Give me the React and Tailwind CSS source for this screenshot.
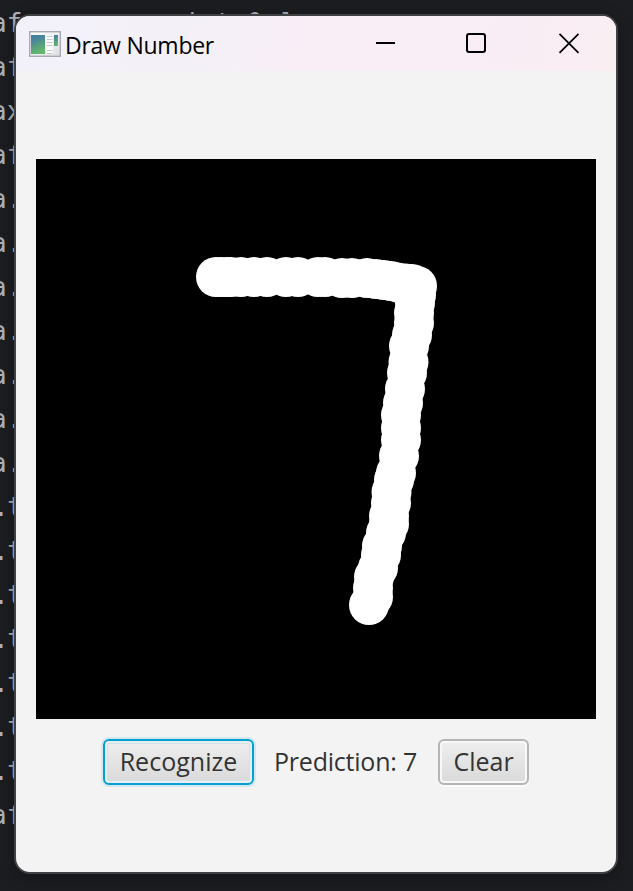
const POINTS = [
  [216,277],[221,277],[227,277],[231,277],[241,277],[254,277],[267,277],[286,277],[298,277],[318,277],[325,277],
  [342,278],[352,278],[367,278],[376,279],[384,280],[391,281],[398,282.5],[406,283.5],[412,284],[417,286],[416,295],
  [415,303],[414,313],[414,323],[412,335],[409,346],[408.5,362],[407,373],[405,389],[403,403],[401,415],[401,428],
  [401,440],[399,456],[396,473],[394,480],[391.5,492],[391,503],[389,516],[389,524],[386,533],[382,546],[381,555],
  [378,568],[374,577],[373,588],[373,597],[369,605],
];

const LINES = [
  "af", "af", "ax", "af", "a.", "a.", "a.", "a.", "a.", "a.", "a.",
  ".t", ".t", ".t", ".t", ".t", ".t", ".t", "af",
];

function AppIcon() {
  return (
    <svg className="block h-[26px] w-8 shrink-0" viewBox="0 0 32 26">
      <defs>
        <linearGradient id="pane" x1="0" y1="0" x2="0.3" y2="1">
          <stop offset="0" stopColor="#3f78a5" />
          <stop offset="1" stopColor="#63b56c" />
        </linearGradient>
        <linearGradient id="frame" x1="0" y1="0" x2="1" y2="1">
          <stop offset="0" stopColor="#ffffff" />
          <stop offset="1" stopColor="#dcdfe2" />
        </linearGradient>
      </defs>
      <rect x="0.7" y="0.7" width="30.6" height="24.6" fill="url(#frame)" stroke="#a5a9b2" strokeWidth="1.4" />
      <rect x="2" y="4" width="14" height="19" fill="url(#pane)" />
      <path d="M2 15Q8 9 16 8V4H2Z" fill="#4a7fa8" opacity="0.4" />
      <rect x="17" y="4" width="7" height="19" fill="#fafafa" />
      <path d="M18 5.5h5.5M18 8.5h5.5M18 11.5h5.5M18 14.5h5.5M18 19.5h5.5M18 22.5h5.5" stroke="#c6c9cc" />
      <rect x="25" y="4" width="4" height="11" fill="url(#pane)" />
    </svg>
  );
}

export default function App() {
  return (
    <div className="relative h-[891px] w-[633px] overflow-hidden bg-[#1c1d20]">
      <div className="pt-px font-['DejaVu_Sans_Mono',monospace] text-[26px] leading-[44px] text-[#aeb2b9]">
        {LINES.map((line, i) => (
          <div
            key={i}
            className={
              line === ".t"
                ? "-ml-[7px] h-[44px] whitespace-pre tracking-[-1.5px]"
                : "-ml-[9px] flex h-[44px] whitespace-pre"
            }
          >
            {line}
            {i === 0 && <span className="ml-[162px]">int 0 ]</span>}
          </div>
        ))}
      </div>
      <div className="absolute left-[14px] top-[14px] flex h-[860px] w-[604px] flex-col overflow-hidden rounded-[16px] border-2 border-[#404144] bg-[#f3f3f3] font-['Open_Sans','Noto_Sans',sans-serif] shadow-[0_4px_16px_rgba(0,0,0,0.3)]">
        <header className="flex h-[55px] shrink-0 items-center bg-linear-[100deg,#f2f1f9_0%,#f5f0f8_35%,#f9edf6_48%,#f9edf6_75%,#f9eef2_100%] pl-[13px] pr-[34px]">
          <AppIcon />
          <span className="ml-[4px] mt-[3px] w-[152px] whitespace-nowrap text-[23px] tracking-[-0.25px] text-black">Draw Number</span>
          <svg className="ml-auto h-[22px] w-[206px] shrink-0" viewBox="0 0 206 22" fill="none" stroke="#000">
            <path d="M-1 10h20" strokeWidth="2" className="overflow-visible" />
            <rect x="91" y="1" width="18" height="18" rx="2" strokeWidth="2" />
            <path d="M183.5 0.8l19 19M202.5 0.8l-19 19" strokeWidth="1.7" />
          </svg>
        </header>
        <svg className="ml-5 mt-[88px] block h-[560px] w-[560px] shrink-0 bg-black" viewBox="36 159 560 560">
          {POINTS.map(([x, y], i) => (
            <circle key={i} cx={x} cy={y} r="20" fill="#fff" />
          ))}
        </svg>
        <div className="mt-5 flex h-[46px] shrink-0 items-center justify-center gap-5 text-[25px] text-[#333]">
          <button className="h-[46px] w-[151px] rounded-[6px] border-2 border-[#039ed3] bg-linear-to-b from-[#efefef] to-[#d9d9d9] tracking-[0.03px] shadow-[0_0_0_2px_#d2e8ef,inset_0_0_0_2px_#e9eef0,inset_0_0_0_3px_#cfe2e8]">
            Recognize
          </button>
          <span className="w-[144px] whitespace-nowrap tracking-[-0.22px]">Prediction: 7</span>
          <button className="h-[46px] w-[91px] rounded-[6px] border-2 border-[#b5b5b5] bg-linear-to-b from-[#efefef] to-[#d9d9d9] shadow-[0_2px_0_#fbfbfb,inset_0_0_0_2px_#f8f8f8]">
            Clear
          </button>
        </div>
      </div>
    </div>
  );
}
